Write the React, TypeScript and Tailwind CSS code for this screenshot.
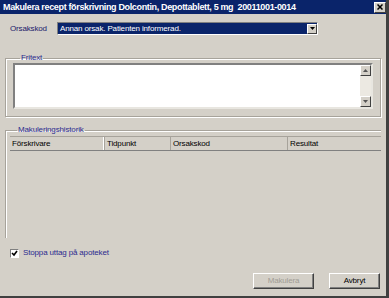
import React from 'react';

const font = "font-['Liberation_Sans','Arial',sans-serif]";

export default function App() {
  return (
    <div className={`w-[389px] h-[298px] bg-[#d4d0c8] flex flex-col border-r-[3px] border-b-[2px] border-[#404040] overflow-hidden text-[8px] tracking-[-0.15px] text-black ${font}`}>
      {/* title bar */}
      <div className="h-[14px] shrink-0 bg-[#0a246a] flex items-center justify-between pl-[3px] pr-[0px]">
        <span className="text-white font-bold text-[9px] tracking-[-0.35px] leading-none whitespace-pre">Makulera recept förskrivning Dolcontin, Depottablett, 5 mg  20011001-0014</span>
        <button className="w-[12px] h-[11px] bg-[#d4d0c8] border border-t-white border-l-white border-r-[#404040] border-b-[#404040] flex items-center justify-center">
          <svg width="6" height="6" viewBox="0 0 6 6"><path d="M0.5 0.5l5 5M5.5 0.5l-5 5" stroke="#000" strokeWidth="1.5" /></svg>
        </button>
      </div>

      <div className="flex-1 flex flex-col px-[5px] pt-[8px]">
        {/* Orsakskod */}
        <div className="flex items-center h-[13px] pl-[5px]">
          <span className="w-[47px] text-[#1a1a6a]">Orsakskod</span>
          <div className="w-[261px] h-[13px] bg-[#0a246a] border border-t-[#808080] border-l-[#808080] border-r-white border-b-white flex items-center">
            <span className="flex-1 pl-[2px] text-white leading-none">Annan orsak. Patienten informerad.</span>
            <div className="w-[10px] h-[10px] bg-[#d4d0c8] border border-t-white border-l-white border-r-[#404040] border-b-[#404040] flex items-center justify-center">
              <svg width="5" height="3" viewBox="0 0 5 3"><path d="M0 0h5L2.5 3z" fill="#000" /></svg>
            </div>
          </div>
        </div>

        {/* Fritext */}
        <fieldset className="mt-[19px] h-[63px] border border-[#a7a39b] shadow-[inset_1px_1px_0_#fff,1px_1px_0_#fff] px-[7px] pb-[6px]">
          <legend className="ml-[7px] px-[1px] text-[#2b2b8f] leading-none">Fritext</legend>
          <div className="mt-[1px] h-[46px] bg-white border-2 border-t-[#808080] border-l-[#808080] border-r-[#e8e6e0] border-b-[#e8e6e0] flex justify-end">
            <div className="w-[11px] h-full bg-[#ece9e2] flex flex-col justify-between">
              <div className="h-[11px] bg-[#d4d0c8] border border-t-white border-l-white border-r-[#404040] border-b-[#404040] flex items-center justify-center">
                <svg width="5" height="3" viewBox="0 0 5 3"><path d="M0 3h5L2.5 0z" fill="#555" /></svg>
              </div>
              <div className="h-[11px] bg-[#d4d0c8] border border-t-white border-l-white border-r-[#404040] border-b-[#404040] flex items-center justify-center">
                <svg width="5" height="3" viewBox="0 0 5 3"><path d="M0 0h5L2.5 3z" fill="#555" /></svg>
              </div>
            </div>
          </div>
        </fieldset>

        {/* Makuleringshistorik */}
        <fieldset className="mt-[9px] h-[112px] border border-[#a7a39b] border-r-0 border-b-0 shadow-[inset_1px_1px_0_#fff] pl-[4px] flex flex-col">
          <legend className="ml-[7px] px-[1px] text-[#2b2b8f] leading-none">Makuleringshistorik</legend>
          <div className="mt-[2px] flex-1 flex flex-col bg-white">
            <div className="h-[15px] flex bg-[#d4d0c8] border-t border-[#a7a39b] border-b border-b-[#808080]">
              <div className="w-[95px] pl-[2px] border-r border-[#a7a39b] shadow-[inset_-1px_0_0_#fff] flex items-center">Förskrivare</div>
              <div className="w-[66px] pl-[2px] border-r border-[#a7a39b] flex items-center">Tidpunkt</div>
              <div className="w-[117px] pl-[2px] border-r border-[#a7a39b] flex items-center">Orsakskod</div>
              <div className="flex-1 pl-[2px] flex items-center">Resultat</div>
            </div>
            <div className="flex-1 bg-white" />
          </div>
        </fieldset>

        {/* checkbox */}
        <div className="mt-[10px] flex items-center pl-[5px] h-[10px]">
          <div className="w-[9px] h-[9px] bg-white border border-t-[#808080] border-l-[#808080] border-r-white border-b-white flex items-center justify-center">
            <svg width="7" height="7" viewBox="0 0 7 7"><path d="M1 3l2 2 3-4" stroke="#000" strokeWidth="1.6" fill="none" /></svg>
          </div>
          <span className="ml-[4px] text-[#2b2b8f]">Stoppa uttag på apoteket</span>
        </div>

        {/* buttons */}
        <div className="mt-auto mb-[7px] flex justify-end gap-[15px] pr-[1px]">
          <button className="w-[61px] h-[16px] bg-[#d4d0c8] border border-t-white border-l-white border-r-[#404040] border-b-[#404040] shadow-[inset_-1px_-1px_0_#808080] text-[#a09c94] leading-none">Makulera</button>
          <button className="w-[51px] h-[16px] bg-[#d4d0c8] border border-t-white border-l-white border-r-[#404040] border-b-[#404040] shadow-[inset_-1px_-1px_0_#808080] text-black leading-none">Avbryt</button>
        </div>
      </div>
    </div>
  );
}
